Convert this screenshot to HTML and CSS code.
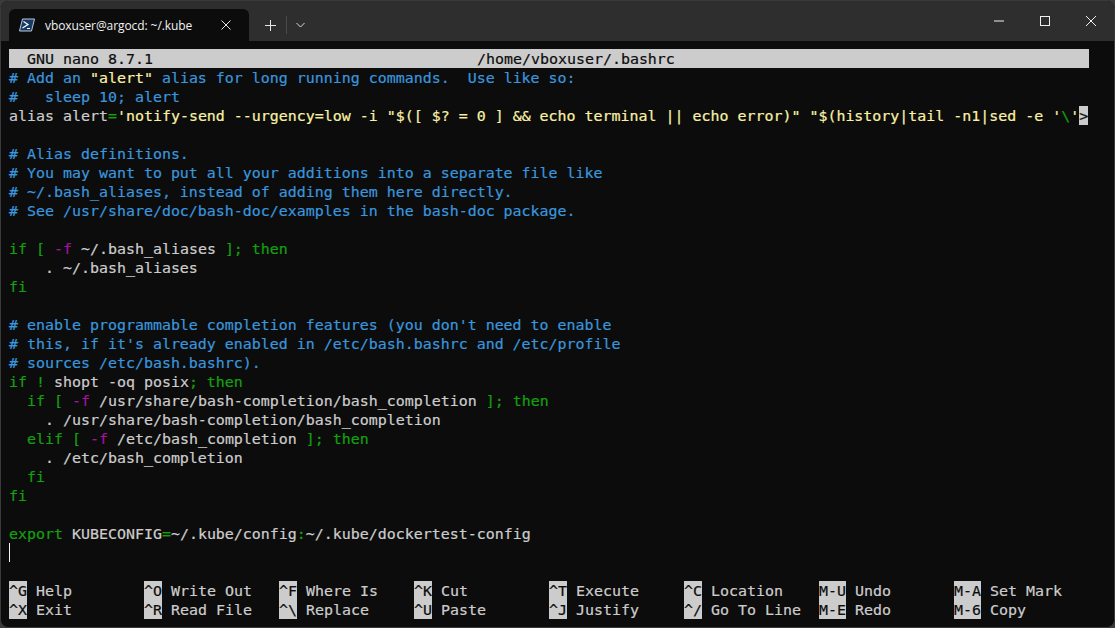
FILE: index.html
```html
<!DOCTYPE html>
<html lang="en">
<head>
    <meta charset="UTF-8">
    <meta name="viewport" content="width=device-width, initial-scale=1.0">
    <title>vboxuser@argocd: ~/.kube</title>
    <link rel="stylesheet" href="styles.css">
</head>
<body>
    <div class="window">
        <div class="tabbar">
            <div class="tab">
                <svg class="tab-icon" width="16" height="14" viewBox="0 0 16 14">
                    <path d="M3.5 1H15.5L12.5 13H.5Z" fill="#1a3a66" stroke="#b9c9de" stroke-width="1"/>
                    <path d="M4.5 3.5L9 6.5L3.5 10M8 10.5H11" fill="none" stroke="#fff" stroke-width="1.2"/>
                </svg>
                <span class="tab-title">vboxuser@argocd: ~/.kube</span>
                <svg class="tab-close" width="10" height="10" viewBox="0 0 10 10">
                    <path d="M.5 .5L9.5 9.5M9.5 .5L.5 9.5" stroke="#e8e8e8" stroke-width="1"/>
                </svg>
            </div>
            <div class="tab-actions">
                <button class="tab-btn tab-new">
                    <svg width="11" height="11" viewBox="0 0 11 11"><path d="M5.5 0V11M0 5.5H11" stroke="#e8e8e8" stroke-width="1"/></svg>
                </button>
                <span class="tab-sep"></span>
                <button class="tab-btn tab-menu">
                    <svg width="9" height="6" viewBox="0 0 9 6"><path d="M.5 1L4.5 5L8.5 1" fill="none" stroke="#d8d8d8" stroke-width="1"/></svg>
                </button>
            </div>
            <div class="win-controls">
                <button class="win-btn">
                    <svg width="10" height="10" viewBox="0 0 10 10"><path d="M0 5H10" stroke="#f0f0f0" stroke-width="1"/></svg>
                </button>
                <button class="win-btn">
                    <svg width="10" height="10" viewBox="0 0 10 10"><rect x=".5" y=".5" width="9" height="9" fill="none" stroke="#f0f0f0" stroke-width="1"/></svg>
                </button>
                <button class="win-btn">
                    <svg width="10" height="10" viewBox="0 0 10 10"><path d="M0 0L10 10M10 0L0 10" stroke="#f0f0f0" stroke-width="1"/></svg>
                </button>
            </div>
        </div>

        <div class="terminal">
            <div class="line title-bar"><span>  GNU nano 8.7.1</span><span class="title-file">/home/vboxuser/.bashrc</span></div>
<div class="line cm"># Add an <span class="yl">"alert"</span> alias for long running commands.  Use like so:</div>
<div class="line cm">#   sleep 10; alert</div>
<div class="line">alias alert<span class="gr">=</span><span class="yl">'notify-send --urgency=low -i "$([ $? = 0 ] &amp;&amp; echo terminal || echo error)" "$(history|tail -n1|sed -e '</span><span class="gr">\</span><span class="yl">'</span><span class="more">&gt;</span></div>
<div class="line"> </div>
<div class="line cm"># Alias definitions.</div>
<div class="line cm"># You may want to put all your additions into a separate file like</div>
<div class="line cm"># ~/.bash_aliases, instead of adding them here directly.</div>
<div class="line cm"># See /usr/share/doc/bash-doc/examples in the bash-doc package.</div>
<div class="line"> </div>
<div class="line"><span class="gr">if [</span> <span class="mg">-f</span> ~/.bash_aliases <span class="gr">]; then</span></div>
<div class="line">    . ~/.bash_aliases</div>
<div class="line gr">fi</div>
<div class="line"> </div>
<div class="line cm"># enable programmable completion features (you don't need to enable</div>
<div class="line cm"># this, if it's already enabled in /etc/bash.bashrc and /etc/profile</div>
<div class="line cm"># sources /etc/bash.bashrc).</div>
<div class="line"><span class="gr">if !</span> shopt -oq posix<span class="gr">; then</span></div>
<div class="line">  <span class="gr">if [</span> <span class="mg">-f</span> /usr/share/bash-completion/bash_completion <span class="gr">]; then</span></div>
<div class="line">    . /usr/share/bash-completion/bash_completion</div>
<div class="line">  <span class="gr">elif [</span> <span class="mg">-f</span> /etc/bash_completion <span class="gr">]; then</span></div>
<div class="line">    . /etc/bash_completion</div>
<div class="line gr">  fi</div>
<div class="line gr">fi</div>
<div class="line"> </div>
<div class="line"><span class="gr">export</span> KUBECONFIG<span class="gr">=</span>~/.kube/config<span class="gr">:</span>~/.kube/dockertest-config</div>
<div class="line"><span class="cursor"></span></div>
<div class="line"> </div>
<div class="shortcuts">
    <div class="line"><span class="key">^G</span> Help</div>
    <div class="line"><span class="key">^O</span> Write Out</div>
    <div class="line"><span class="key">^F</span> Where Is</div>
    <div class="line"><span class="key">^K</span> Cut</div>
    <div class="line"><span class="key">^T</span> Execute</div>
    <div class="line"><span class="key">^C</span> Location</div>
    <div class="line"><span class="key">M-U</span> Undo</div>
    <div class="line"><span class="key">M-A</span> Set Mark</div>
    <div class="line"><span class="key">^X</span> Exit</div>
    <div class="line"><span class="key">^R</span> Read File</div>
    <div class="line"><span class="key">^\</span> Replace</div>
    <div class="line"><span class="key">^U</span> Paste</div>
    <div class="line"><span class="key">^J</span> Justify</div>
    <div class="line"><span class="key">^/</span> Go To Line</div>
    <div class="line"><span class="key">M-E</span> Redo</div>
    <div class="line"><span class="key">M-6</span> Copy</div>
</div>
        </div>
    </div>
</body>
</html>
```

FILE: styles.css
```css
html, body {
    margin: 0;
    height: 100%;
    background-color: #3b3b3f;
    overflow: hidden;
}
.window {
    height: 628px;
    background-color: #0c0c0c;
    border-radius: 8px;
    box-sizing: border-box;
    border: 1px solid #3a3a3a;
    overflow: hidden;
}
.tabbar {
    display: flex;
    align-items: flex-end;
    height: 40px;
    background-color: #2e2e2e;
    padding-left: 8px;
}
.tab {
    display: flex;
    align-items: center;
    width: 240px;
    height: 32px;
    box-sizing: border-box;
    padding: 0 18px 0 10px;
    background-color: #0c0c0c;
    border-radius: 6px 6px 0 0;
    color: #f2f2f2;
    font-family: "Open Sans", "Noto Sans", sans-serif;
    font-size: 12px;
    letter-spacing: -0.08px;
}
.tab-icon {
    margin-right: 10px;
    flex: none;
}
.tab-title {
    flex: 1;
    white-space: nowrap;
}
.tab-actions {
    display: flex;
    align-items: center;
    height: 32px;
}
.tab-btn, .win-btn {
    display: flex;
    align-items: center;
    justify-content: center;
    padding: 0;
    background: none;
    border: none;
}
.tab-btn {
    height: 32px;
}
.tab-new {
    width: 32px;
    margin-left: 5px;
}
.tab-menu {
    width: 26px;
}
.tab-sep {
    width: 1px;
    height: 18px;
    background-color: #4a4a4a;
}
.win-controls {
    display: flex;
    align-self: flex-start;
    margin-left: auto;
}
.win-btn {
    width: 46px;
    height: 40px;
}
.terminal {
    padding: 8px 0 0 8px;
    color: #cccccc;
    font-family: "DejaVu Sans Mono", "Liberation Mono", monospace;
    font-size: 14.95px;
    -webkit-text-stroke: 0.2px;
}
.line {
    height: 19px;
    line-height: 21px;
    white-space: pre;
}
.title-bar {
    position: relative;
    width: 1080px;
    background-color: #cccccc;
    color: #0c0c0c;
}
.title-file {
    position: absolute;
    left: 468px;
}
.cm { color: #3a96dd; }
.yl { color: #f9f1a5; }
.gr { color: #13a10e; }
.mg { color: #a3139e; }
.more, .key {
    display: inline-block;
    height: 19px;
    background-color: #cccccc;
    color: #0c0c0c;
}
.cursor {
    display: inline-block;
    width: 1px;
    height: 19px;
    background-color: #f2f2f2;
    vertical-align: top;
}
.shortcuts {
    display: grid;
    grid-template-columns: repeat(8, 135px);
}
```
